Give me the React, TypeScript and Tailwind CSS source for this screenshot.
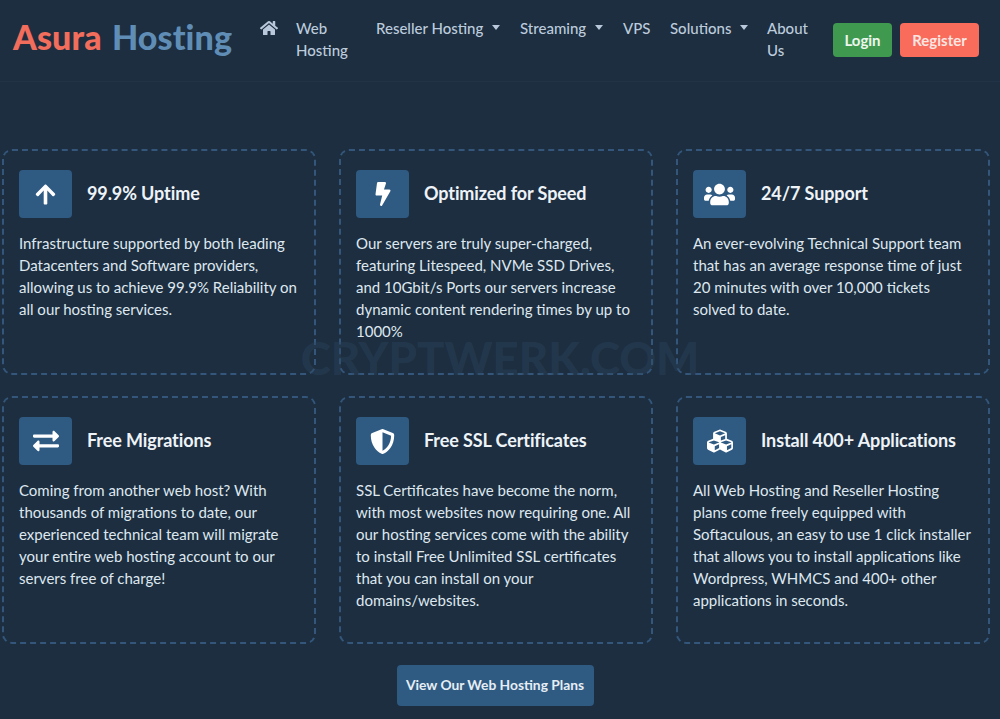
import React from "react";
import { FaHome, FaArrowUp, FaBolt, FaUsers, FaExchangeAlt, FaShieldAlt, FaCubes } from "react-icons/fa";

type Card = { icon: React.ReactNode; title: string; lines: string[] };

const cards: Card[] = [
  { icon: <FaArrowUp className="text-[23px]" />, title: "99.9% Uptime", lines: ["Infrastructure supported by both leading", "Datacenters and Software providers,", "allowing us to achieve 99.9% Reliability on", "all our hosting services."] },
  { icon: <FaBolt className="text-[24px]" />, title: "Optimized for Speed", lines: ["Our servers are truly super-charged,", "featuring Litespeed, NVMe SSD Drives,", "and 10Gbit/s Ports our servers increase", "dynamic content rendering times by up to", "1000%"] },
  { icon: <FaUsers className="text-[31px]" />, title: "24/7 Support", lines: ["An ever-evolving Technical Support team", "that has an average response time of just", "20 minutes with over 10,000 tickets", "solved to date."] },
  { icon: <FaExchangeAlt className="text-[26px]" />, title: "Free Migrations", lines: ["Coming from another web host? With", "thousands of migrations to date, our", "experienced technical team will migrate", "your entire web hosting account to our", "servers free of charge!"] },
  { icon: <FaShieldAlt className="text-[25px]" />, title: "Free SSL Certificates", lines: ["SSL Certificates have become the norm,", "with most websites now requiring one. All", "our hosting services come with the ability", "to install Free Unlimited SSL certificates", "that you can install on your", "domains/websites."] },
  { icon: <FaCubes className="text-[26px]" />, title: "Install 400+ Applications", lines: ["All Web Hosting and Reseller Hosting", "plans come freely equipped with", "Softaculous, an easy to use 1 click installer", "that allows you to install applications like", "Wordpress, WHMCS and 400+ other", "applications in seconds."] },
];

function Caret() {
  return <span className="ml-[9px] mt-[7px] inline-block h-0 w-0 border-x-[4.5px] border-t-[5px] border-x-transparent border-t-[#b9c8da]" />;
}

function NavItem({ label, width, caret }: { label: React.ReactNode; width: string; caret?: boolean }) {
  return (
    <a className={`flex items-start text-[15px] font-medium leading-[21.5px] text-[#bccbdc] ${width}`}>
      <span>{label}</span>
      {caret && <Caret />}
    </a>
  );
}

export default function App() {
  return (
    <div className="relative min-h-[719px] overflow-hidden bg-[#1c2e40] font-['Lato','Noto_Sans',sans-serif]">
      <header className="flex h-[82px] border-b border-[#213346] pl-[13px]">
        <div className="mt-[16px] w-[247px] whitespace-nowrap text-[34px] font-black leading-[42px] tracking-[0.1px] [word-spacing:2px]">
          <span className="text-[#f26d5b]">Asura</span> <span className="text-[#5f8db5]">Hosting</span>
        </div>
        <nav className="mt-[18px] flex items-start">
          <a className="mt-[1px] w-[36px] text-[#b9c8da]"><FaHome className="text-[18px]" /></a>
          <NavItem label={<>Web<br />Hosting</>} width="w-[80px]" />
          <NavItem label="Reseller Hosting" width="w-[144px]" caret />
          <NavItem label="Streaming" width="w-[103px]" caret />
          <NavItem label="VPS" width="w-[47px]" />
          <NavItem label="Solutions" width="w-[97px]" caret />
          <NavItem label={<>About<br />Us</>} width="w-[66px]" />
        </nav>
        <div className="mt-[23px] flex h-[34px] gap-[8px]">
          <button className="w-[59px] rounded-[4px] bg-[#3f9a50] text-[15px] font-bold text-[#eef6ee]">Login</button>
          <button className="w-[79px] rounded-[4px] bg-[#f96b5b] text-[15px] font-bold text-[#fbe6e2]">Register</button>
        </div>
      </header>

      <main className="px-[2px] pt-[67px]">
        <div className="grid w-[988px] grid-cols-[314px_314px_314px] gap-x-[23px] gap-y-[21px]">
          {cards.map((c) => (
            <section key={c.title} className="rounded-[10px] border-2 border-dashed border-[#34567a] px-[15px] pb-[31px] pt-[19px]">
              <div className="flex items-center gap-[15px]">
                <div className="flex h-[48px] w-[53px] shrink-0 items-center justify-center rounded-[4px] bg-[#2f5a82] text-white">{c.icon}</div>
                <h3 className="mb-[1px] whitespace-nowrap text-[18px] font-bold tracking-[-0.1px] text-[#eef3f8]">{c.title}</h3>
              </div>
              <p className="mt-[14px] whitespace-nowrap text-[15px] leading-[22px] text-[#dfe7ef]">
                {c.lines.map((l, i) => (
                  <span key={i} className="block">{l}</span>
                ))}
              </p>
            </section>
          ))}
        </div>
        <div className="mt-[21px] flex justify-center pr-[10px]">
          <button className="h-[41px] w-[197px] whitespace-nowrap rounded-[4px] bg-[#2f5a82] text-[13.8px] font-bold text-[#e6eef5]">View Our Web Hosting Plans</button>
        </div>
      </main>

      <div className="pointer-events-none absolute left-0 right-0 top-[332px] text-center text-[45.5px] font-black leading-[52px] text-[#2e465f]/40">CRYPTWERK.COM</div>
    </div>
  );
}
